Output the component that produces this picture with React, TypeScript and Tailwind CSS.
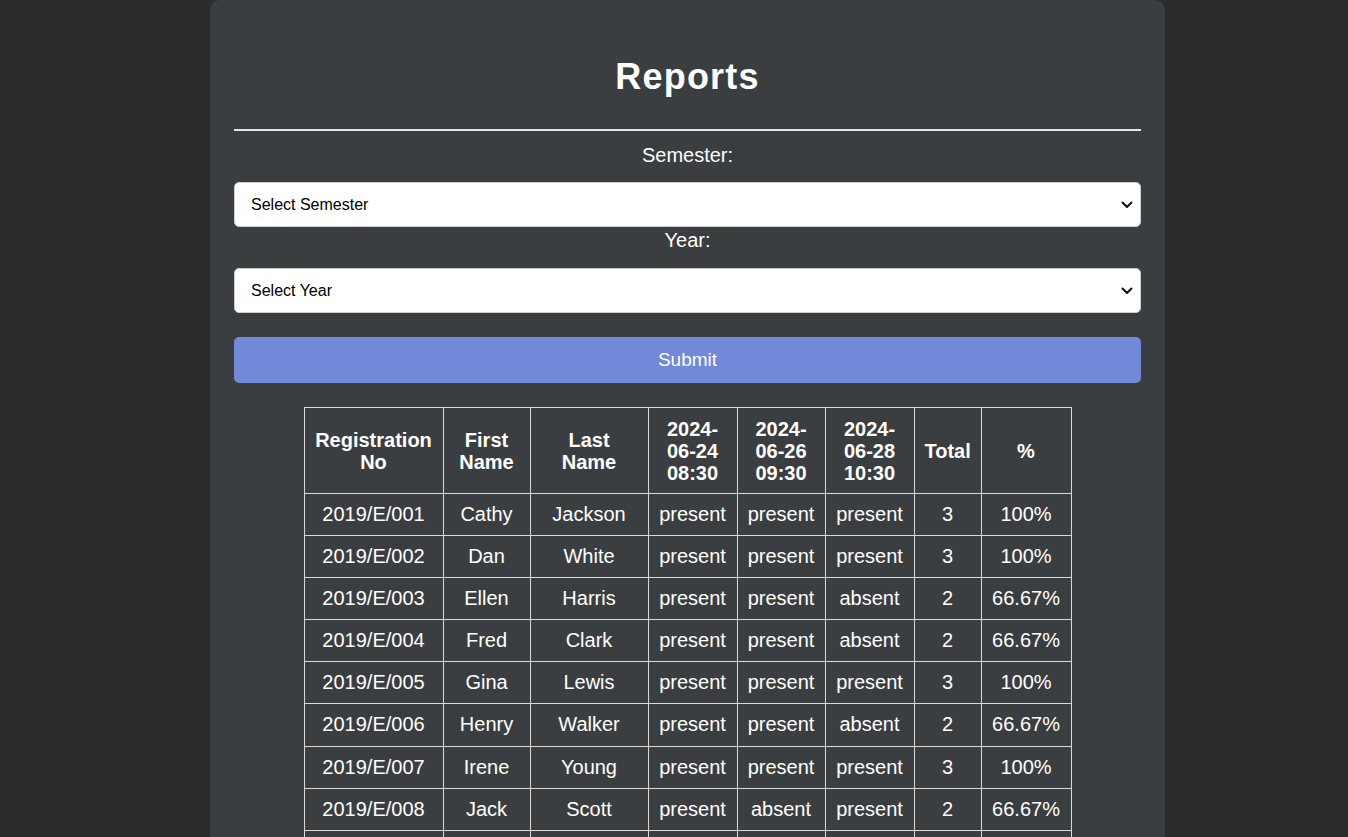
import React from 'react';

type Row = {
  reg: string;
  first: string;
  last: string;
  marks: string[];
  total: number;
  pct: string;
};

const rows: Row[] = [
  { reg: '2019/E/001', first: 'Cathy', last: 'Jackson', marks: ['present', 'present', 'present'], total: 3, pct: '100%' },
  { reg: '2019/E/002', first: 'Dan', last: 'White', marks: ['present', 'present', 'present'], total: 3, pct: '100%' },
  { reg: '2019/E/003', first: 'Ellen', last: 'Harris', marks: ['present', 'present', 'absent'], total: 2, pct: '66.67%' },
  { reg: '2019/E/004', first: 'Fred', last: 'Clark', marks: ['present', 'present', 'absent'], total: 2, pct: '66.67%' },
  { reg: '2019/E/005', first: 'Gina', last: 'Lewis', marks: ['present', 'present', 'present'], total: 3, pct: '100%' },
  { reg: '2019/E/006', first: 'Henry', last: 'Walker', marks: ['present', 'present', 'absent'], total: 2, pct: '66.67%' },
  { reg: '2019/E/007', first: 'Irene', last: 'Young', marks: ['present', 'present', 'present'], total: 3, pct: '100%' },
  { reg: '2019/E/008', first: 'Jack', last: 'Scott', marks: ['present', 'absent', 'present'], total: 2, pct: '66.67%' },
  { reg: '2019/E/009', first: 'Kate', last: 'Adams', marks: ['present', 'present', 'present'], total: 3, pct: '100%' },
];

// dropdown arrow drawn over the native select
const Chevron = () => (
  <svg
    width="12"
    height="8"
    viewBox="0 0 12 8"
    fill="none"
    stroke="#111"
    strokeWidth="2"
    strokeLinecap="round"
    strokeLinejoin="round"
    className="pointer-events-none absolute right-[8px] top-1/2 -translate-y-1/2"
  >
    <path d="M1.5 1.5L6 6l4.5-4.5" />
  </svg>
);

const SelectBox = ({ placeholder }: { placeholder: string }) => (
  <div className="relative">
    <select className="block h-[45px] w-full appearance-none rounded-[5px] border border-[#cccccc] bg-white pl-[16px] pr-[32px] text-[16px] text-black outline-none">
      <option>{placeholder}</option>
    </select>
    <Chevron />
  </div>
);

const th = 'border border-[#d9d9d9] px-[10px] pt-[10px] pb-[9px] text-center align-middle text-[20px] font-bold leading-[22px] text-white';
const td = 'border border-[#d9d9d9] px-[10px] py-[10px] text-center align-middle text-[20px] leading-[21.1px] text-white';

export default function App() {
  return (
    <div className="flex min-h-[837px] bg-[#2b2b2b] pl-[210px] font-['Liberation_Sans',Arial,sans-serif]">
      <div className="w-[955px] rounded-t-[10px] bg-[#3b3e41] px-[24px] pt-[56px] pb-[40px]">
        <h1 className="text-center text-[36px] font-bold leading-[41px] tracking-[1.2px] text-white">Reports</h1>
        <hr className="mt-[32px] border-t-2 border-[#e5e5e5]" />

        <label className="mt-[13px] block text-center text-[20px] leading-[23px] text-white">Semester:</label>
        <div className="mt-[15px]">
          <SelectBox placeholder="Select Semester" />
        </div>

        <label className="mt-[2px] block text-center text-[20px] leading-[23px] text-white">Year:</label>
        <div className="mt-[16px]">
          <SelectBox placeholder="Select Year" />
        </div>

        <button className="mt-[24px] block h-[46px] w-full rounded-[5px] bg-[#7189d8] text-[19px] text-white">
          Submit
        </button>

        <div className="mt-[24px] flex justify-center">
          <table className="w-[767px] table-fixed border-collapse">
            <colgroup>
              <col className="w-[139px]" />
              <col className="w-[87px]" />
              <col className="w-[118px]" />
              <col className="w-[89px]" />
              <col className="w-[88px]" />
              <col className="w-[89px]" />
              <col className="w-[67px]" />
              <col className="w-[90px]" />
            </colgroup>
            <thead>
              <tr>
                <th className={th}>Registration No</th>
                <th className={th}>First Name</th>
                <th className={th}>Last Name</th>
                <th className={th}>2024-06-24 08:30</th>
                <th className={th}>2024-06-26 09:30</th>
                <th className={th}>2024-06-28 10:30</th>
                <th className={th}>Total</th>
                <th className={th}>%</th>
              </tr>
            </thead>
            <tbody>
              {rows.map((r) => (
                <tr key={r.reg}>
                  <td className={td}>{r.reg}</td>
                  <td className={td}>{r.first}</td>
                  <td className={td}>{r.last}</td>
                  {r.marks.map((m, i) => (
                    <td key={i} className={td}>{m}</td>
                  ))}
                  <td className={td}>{r.total}</td>
                  <td className={td}>{r.pct}</td>
                </tr>
              ))}
            </tbody>
          </table>
        </div>
      </div>
    </div>
  );
}
